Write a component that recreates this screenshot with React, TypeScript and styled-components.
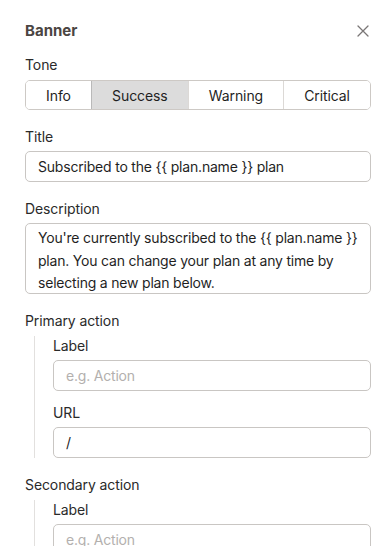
import React from 'react';
import styled, { createGlobalStyle } from 'styled-components';

const GlobalStyle = createGlobalStyle`
  html, body {
    margin: 0;
    padding: 0;
    background: #ffffff;
  }
  body {
    font-family: Inter, 'Noto Sans', 'Liberation Sans', sans-serif;
    color: #202020;
    overflow: hidden;
  }
  * {
    box-sizing: border-box;
  }
`;

const Panel = styled.div`
  width: 390px;
  height: 546px;
  overflow: hidden;
  padding: 21px 19px 0 25px;
  display: flex;
  flex-direction: column;
`;

const Header = styled.div`
  display: flex;
  align-items: center;
  justify-content: space-between;
  height: 20px;
  margin-bottom: 14px;
`;

const Heading = styled.h2`
  margin: 0;
  font-size: 15px;
  font-weight: 700;
  color: #4b4542;
  line-height: 20px;
`;

const CloseButton = styled.button`
  border: none;
  background: none;
  padding: 0;
  width: 16px;
  height: 16px;
  display: flex;
  align-items: center;
  justify-content: center;
  color: #7a7676;
  cursor: pointer;
`;

const Fields = styled.div<{ gap: number }>`
  display: flex;
  flex-direction: column;
  gap: ${p => p.gap}px;
`;

const Field = styled.div`
  display: flex;
  flex-direction: column;
  gap: 4px;
`;

const Label = styled.label`
  font-size: 14px;
  line-height: 20px;
  color: #2a2a2a;
  letter-spacing: -0.1px;
`;

const Segmented = styled.div`
  display: flex;
  height: 30px;
  border: 1px solid #cdc9c5;
  border-radius: 5px;
  overflow: hidden;
  margin-top: 1px;
`;

const Segment = styled.button<{ active?: boolean }>`
  flex: 1 1 auto;
  padding: 0 12px;
  border: none;
  border-left: 1px solid ${p => (p.active ? '#b9b9b9' : '#dcd9d6')};
  background: ${p => (p.active ? '#dcdcdc' : '#ffffff')};
  font-family: inherit;
  font-size: 14px;
  letter-spacing: -0.1px;
  color: #1f1f1f;
  cursor: pointer;

  &:first-child {
    border-left: none;
  }
`;

const TextInput = styled.input`
  width: 100%;
  height: 31px;
  padding: 0 12px;
  border: 1px solid #c9c6c3;
  border-radius: 5px;
  font-family: inherit;
  font-size: 14px;
  letter-spacing: -0.2px;
  color: #1f1f1f;
  background: #ffffff;
  outline: none;

  &::placeholder {
    color: #b3b0ae;
  }
`;

const TextArea = styled.textarea`
  width: 100%;
  height: 71px;
  padding: 3px 6px 0 12px;
  border: 1px solid #c9c6c3;
  border-radius: 5px;
  font-family: inherit;
  font-size: 14px;
  letter-spacing: -0.2px;
  line-height: 22.5px;
  color: #1f1f1f;
  resize: none;
  outline: none;
  overflow: hidden;
`;

const Group = styled.div`
  margin-top: 1px;
  margin-left: 9px;
  padding-left: 18px;
  border-left: 1px solid #e2e0de;
`;

const CloseIcon = () => (
  <svg width="12" height="12" viewBox="0 0 12 12" fill="none">
    <path d="M1 1L11 11M11 1L1 11" stroke="currentColor" strokeWidth="1.3" strokeLinecap="round" />
  </svg>
);

const tones = ['Info', 'Success', 'Warning', 'Critical'];

const ActionGroup = ({ title, url }: { title: string; url?: string }) => (
  <Field>
    <Label>{title}</Label>
    <Group>
      <Fields gap={12}>
        <Field>
          <Label>Label</Label>
          <TextInput placeholder="e.g. Action" />
        </Field>
        <Field>
          <Label>URL</Label>
          <TextInput defaultValue={url} />
        </Field>
      </Fields>
    </Group>
  </Field>
);

export default function App() {
  return (
    <>
      <GlobalStyle />
      <Panel>
        <Header>
          <Heading>Banner</Heading>
          <CloseButton aria-label="Close">
            <CloseIcon />
          </CloseButton>
        </Header>
        <Fields gap={17}>
          <Field>
            <Label>Tone</Label>
            <Segmented>
              {tones.map(t => (
                <Segment key={t} active={t === 'Success'}>
                  {t}
                </Segment>
              ))}
            </Segmented>
          </Field>
          <Field>
            <Label>Title</Label>
            <TextInput defaultValue="Subscribed to the {{ plan.name }} plan" />
          </Field>
          <Field>
            <Label>Description</Label>
            <TextArea defaultValue="You're currently subscribed to the {{ plan.name }} plan. You can change your plan at any time by selecting a new plan below." />
          </Field>
          <ActionGroup title="Primary action" url="/" />
          <ActionGroup title="Secondary action" url="" />
        </Fields>
      </Panel>
    </>
  );
}
